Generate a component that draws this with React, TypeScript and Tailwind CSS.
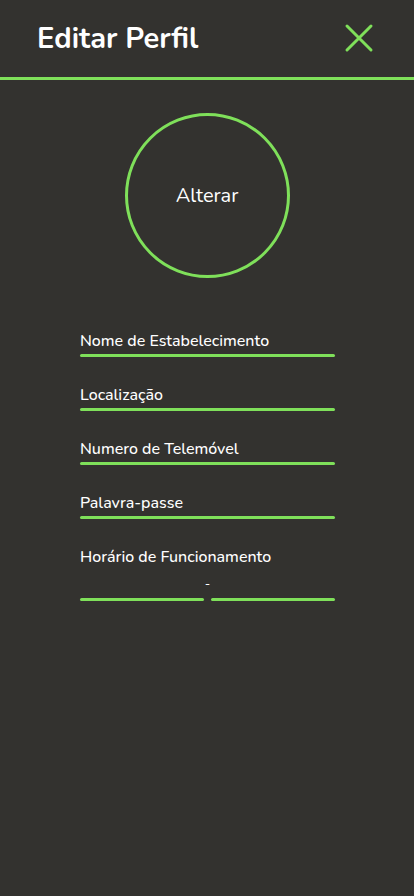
import React from "react";

const font = { fontFamily: "Nunito, 'Noto Sans', 'Open Sans', sans-serif" };

function Field({ label }: { label: string }) {
  return (
    <div className="flex flex-col">
      <span className="text-[16px] font-medium leading-[20px] text-white">{label}</span>
      <div className="mt-[3px] h-[3px] w-[255px] rounded-full bg-[#7fe05a]" />
    </div>
  );
}

export default function App() {
  return (
    <div className="min-h-[896px] w-[414px] bg-[#33322f]" style={font}>
      <div className="flex h-[77px] items-center justify-between pl-[37px] pr-[40px]">
        <h1 className="text-[29px] font-bold leading-none text-white">Editar Perfil</h1>
        <svg width="30" height="30" viewBox="0 0 30 30" className="-mt-[2px]">
          <path d="M3 3 L27 27 M27 3 L3 27" stroke="#7fe05a" strokeWidth="3" strokeLinecap="round" />
        </svg>
      </div>
      <div className="h-[3px] w-full bg-[#7fe05a]" />
      <div className="flex justify-center pt-[33px]">
        <div className="flex h-[165px] w-[165px] items-center justify-center rounded-full border-[3px] border-[#7fe05a]">
          <span className="text-[20px] text-white">Alterar</span>
        </div>
      </div>
      <div className="flex flex-col gap-[28px] pl-[80px] pt-[53px]">
        <Field label="Nome de Estabelecimento" />
        <Field label="Localização" />
        <Field label="Numero de Telemóvel" />
        <Field label="Palavra-passe" />
        <div className="flex flex-col">
          <span className="text-[16px] font-medium leading-[20px] text-white">Horário de Funcionamento</span>
          <div className="mt-[11px] flex w-[255px] items-end">
            <div className="h-[3px] w-[124px] rounded-full bg-[#7fe05a]" />
            <div className="flex w-[7px] justify-center pb-[10px] text-[13px] leading-none text-white">-</div>
            <div className="h-[3px] w-[124px] rounded-full bg-[#7fe05a]" />
          </div>
        </div>
      </div>
    </div>
  );
}
